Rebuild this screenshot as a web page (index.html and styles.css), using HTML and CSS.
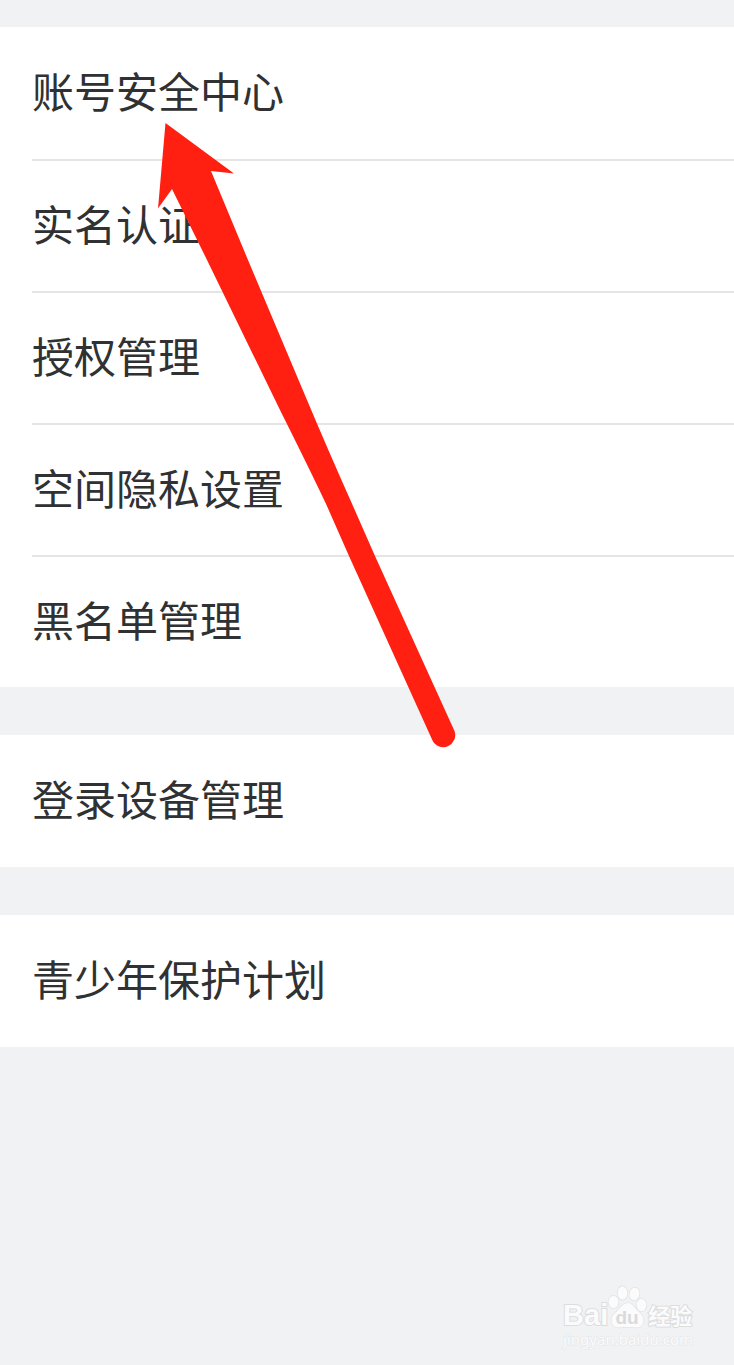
FILE: index.html
```html
<!DOCTYPE html>
<html lang="zh-CN">
<head>
<meta charset="utf-8">
<meta name="viewport" content="width=device-width, initial-scale=1">
<title>账号安全</title>
<link rel="stylesheet" href="styles.css">
</head>
<body>
<main class="page">
  <ul class="group">
    <li class="item"><a class="link" href="#">账号安全中心</a></li>
    <li class="item"><a class="link" href="#">实名认证</a></li>
    <li class="item"><a class="link" href="#">授权管理</a></li>
    <li class="item"><a class="link" href="#">空间隐私设置</a></li>
    <li class="item"><a class="link" href="#">黑名单管理</a></li>
  </ul>
  <ul class="group">
    <li class="item"><a class="link" href="#">登录设备管理</a></li>
  </ul>
  <ul class="group">
    <li class="item"><a class="link" href="#">青少年保护计划</a></li>
  </ul>
  <svg class="arrow" width="300" height="628" viewBox="156 121 300 628" aria-hidden="true">
    <path fill="#ff2012" d="M165.500 123L234 173.500L211 171L248 260L307 400Q328 450 353 506L375 556L454.500 731A12 12 0 0 1 432.500 740.500L349 556L326.500 505Q310 470 280 410L207 260L172 189L158 208.500Z"/>
  </svg>
  <div class="watermark">
    <div class="brand">
      <span class="latin">Bai</span>
      <svg class="paw" width="40" height="44" viewBox="0 0 40 44" aria-hidden="true">
        <g fill="#fbfbfc" stroke="#dcdddf" stroke-width="1.200">
          <ellipse cx="5.500" cy="17" rx="5" ry="6.200"/>
          <ellipse cx="14.500" cy="8" rx="5" ry="6.800"/>
          <ellipse cx="26.500" cy="9" rx="5" ry="6.500" transform="rotate(12 26.500 9)"/>
          <ellipse cx="33.500" cy="20" rx="5" ry="6.200"/>
          <path d="M20 18C15 18 13 22 10 25C6 29 3 31 3.500 36C4 41 8 43 12 42.500C17 42 22 42 27 42.500C32 43 35 41 35.500 36C36 31 32 28 29 25C26 22 24 18 20 18Z"/>
        </g>
        <text class="du" x="19" y="39" text-anchor="middle">du</text>
      </svg>
      <span class="cjk">经验</span>
    </div>
    <div class="site">jingyan.baidu.com</div>
  </div>
</main>
</body>
</html>
```
FILE: styles.css
```css
* {
  box-sizing: border-box;
}

body {
  margin: 0;
  background: #f1f2f4;
  color: #303133;
  font-family: "Noto Sans CJK SC", sans-serif;
}

.page {
  position: relative;
  display: flex;
  flex-direction: column;
  gap: 48px;
  min-height: 100vh;
  padding: 27px 0 48px;
}

.group {
  margin: 0;
  padding: 0 0 0 32px;
  list-style: none;
  background: #fff;
}

.item + .item {
  border-top: 2px solid #e5e5e5;
}

.link {
  display: block;
  padding: 32px 0 38px;
  font-size: 42px;
  line-height: 62px;
  color: inherit;
  text-decoration: none;
}

.item + .item .link {
  padding: 31px 0 37px;
}

.arrow {
  position: absolute;
  top: 121px;
  left: 156px;
  pointer-events: none;
}

.watermark {
  position: absolute;
  right: 41px;
  bottom: 16px;
  color: #fbfbfc;
  -webkit-text-stroke: 2px #dcdddf;
  paint-order: stroke fill;
}

.brand {
  display: flex;
  align-items: flex-end;
  height: 44px;
}

.latin {
  font: bold 29px/28px "Liberation Sans", Arial, sans-serif;
}

.paw {
  flex: none;
}

.du {
  font: bold 19px "Liberation Sans", Arial, sans-serif;
  fill: #d9dadc;
  -webkit-text-stroke: 0;
}

.cjk {
  font-size: 22px;
  font-weight: 700;
  line-height: 30px;
}

.site {
  font: 15px/20px "Noto Sans", sans-serif;
  -webkit-text-stroke: 1px #e4e5e7;
}
```
